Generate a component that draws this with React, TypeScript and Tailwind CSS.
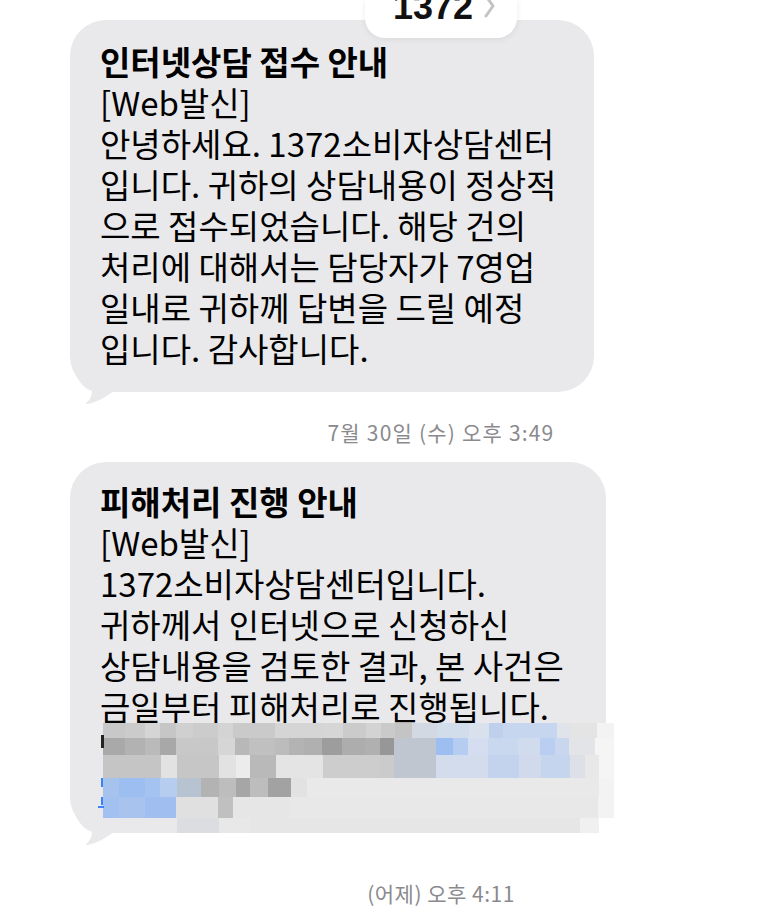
import React from 'react';

const ko = "font-['Noto_Sans_CJK_KR','Noto_Sans',sans-serif]";

// pixelated (blurred) part of the second message, row by row
const mosaic: { h: string; cells: string[] }[] = [
  {
    h: 'h-[15px]',
    cells: [
      'w-[22px] bg-[#c8c8c8]', 'w-[20px] bg-[#cbcbcb]', 'w-[15px] bg-[#d5d5d5]', 'w-[16px] bg-[#c6c6c6]',
      'w-[17px] bg-[#d0d0d0]', 'w-[25px] bg-[#cccccc]', 'w-[15px] bg-[#d4d4d4]', 'w-[42px] bg-[#cacaca]',
      'w-[24px] bg-[#d5d5d5]', 'w-[24px] bg-[#d5d5d5]', 'w-[20px] bg-[#d6d6d6]', 'w-[23px] bg-[#cbcbcb]',
      'w-[15px] bg-[#d3d3d3]', 'w-[14px] bg-[#cacaca]', 'w-[17px] bg-[#c4c4c4]', 'w-[25px] bg-[#d3d9e2]',
      'w-[32px] bg-[#d2ddec]', 'w-[20px] bg-[#d9e1ec]', 'w-[14px] bg-[#bfd0ec]', 'w-[22px] bg-[#c6d6ee]',
      'w-[32px] bg-[#c6d6ee]', 'w-[14px] bg-[#e0e4ea]', 'w-[26px] bg-[#e4e4e4]', 'w-[17px] bg-[#f3f3f3]',
    ],
  },
  {
    h: 'h-[17px]',
    cells: [
      'w-[22px] bg-[#a9a9a9]', 'w-[20px] bg-[#b2b2b2]', 'w-[15px] bg-[#bababa]', 'w-[16px] bg-[#a8a8a8]',
      'w-[42px] bg-[#c8c8c8]', 'w-[17px] bg-[#d6d6d6]', 'w-[14px] bg-[#b8b8b8]', 'w-[26px] bg-[#c0c0c0]',
      'w-[14px] bg-[#bcbcbc]', 'w-[15px] bg-[#b3b3b3]', 'w-[18px] bg-[#b0b0b0]', 'w-[20px] bg-[#9d9d9d]',
      'w-[23px] bg-[#adadad]', 'w-[15px] bg-[#b0b0b0]', 'w-[14px] bg-[#979797]', 'w-[42px] bg-[#c0c6d0]',
      'w-[17px] bg-[#9dbef0]', 'w-[15px] bg-[#b5cdf0]', 'w-[20px] bg-[#d4def0]', 'w-[30px] bg-[#c9d8ee]',
      'w-[22px] bg-[#d0dcee]', 'w-[15px] bg-[#b9cef0]', 'w-[14px] bg-[#c8d6ee]', 'w-[26px] bg-[#e2e4e8]',
      'w-[19px] bg-[#f5f5f5]',
    ],
  },
  {
    h: 'h-[23px]',
    cells: [
      'w-[58px] bg-[#c5c5c5]', 'w-[16px] bg-[#e2e2e2]', 'w-[42px] bg-[#c6c6c6]', 'w-[17px] bg-[#e2e2e2]',
      'w-[14px] bg-[#ececec]', 'w-[26px] bg-[#b9b9b9]', 'w-[47px] bg-[#e4e4e4]', 'w-[57px] bg-[#cdcdcd]',
      'w-[14px] bg-[#cbcbcb]', 'w-[42px] bg-[#c0c6d0]', 'w-[52px] bg-[#d2dcec]', 'w-[31px] bg-[#c3d3ee]',
      'w-[22px] bg-[#d0daec]', 'w-[29px] bg-[#c6d5ee]', 'w-[15px] bg-[#dde0e6]', 'w-[14px] bg-[#e8e8e8]',
      'w-[15px] bg-[#f5f5f5]',
    ],
  },
  {
    h: 'h-[19px]',
    cells: [
      'w-[16px] bg-[#a6c3ee]', 'w-[26px] bg-[#9dbef0]', 'w-[15px] bg-[#a5c3f0]', 'w-[17px] bg-[#b6cdf0]',
      'w-[24px] bg-[#b7c3d0]', 'w-[18px] bg-[#b3b3b3]', 'w-[17px] bg-[#bdbdbd]', 'w-[14px] bg-[#a6a6a6]',
      'w-[18px] bg-[#bdbdbd]', 'w-[23px] bg-[#a2a2a2]', 'w-[16px] bg-[#e2e2e2]', 'w-[292px] bg-[#e9e9e9]',
      'w-[15px] bg-[#f3f3f3]',
    ],
  },
  {
    h: 'h-[21px]',
    cells: [
      'w-[16px] bg-[#a3c1f0]', 'w-[26px] bg-[#a8c3ee]', 'w-[31px] bg-[#a0bff0]', 'w-[42px] bg-[#e0e0e0]',
      'w-[15px] bg-[#c0c0c0]', 'w-[56px] bg-[#e6e6e6]', 'w-[309px] bg-[#e8e8e8]', 'w-[16px] bg-[#f3f3f3]',
    ],
  },
  {
    h: 'h-[15px]',
    cells: [
      'w-[74px]', 'w-[42px] bg-[#dcdde0]', 'w-[31px] bg-[#e8e8e8]', 'w-[330px] bg-[#e6e6e6]',
      'w-[19px] bg-[#f0f0f0]',
    ],
  },
];

function Tail() {
  return (
    <svg
      className="absolute left-0 bottom-[-13px]"
      width="50"
      height="30"
      viewBox="0 0 50 30"
    >
      <path
        d="M6 0 C10 9, 16 14, 22 16 C22 21, 20 25, 16 28 Q15 29, 18 29 C28 27, 37 21, 44 16 L44 6 Z"
        fill="#e9e9eb"
      />
    </svg>
  );
}

function Bubble({ className, children }: { className: string; children: React.ReactNode }) {
  return (
    <div className={`relative whitespace-nowrap rounded-[36px] bg-[#e9e9eb] pl-[30px] text-[33px] leading-[41px] text-black ${className}`}>
      {children}
      <Tail />
    </div>
  );
}

function Stamp({ className, children }: { className: string; children: React.ReactNode }) {
  return (
    <div className={`w-[742px] text-center text-[21px] leading-[24px] text-[#8a8a8e] ${className}`}>
      {children}
    </div>
  );
}

export default function App() {
  return (
    <div className={`relative h-[912px] w-full overflow-hidden bg-white ${ko}`}>
      {/* contact name pill at top */}
      <div className="absolute left-[365px] top-0 z-10 h-[38px] w-[152px] rounded-b-[20px] bg-white shadow-[0_1px_6px_rgba(0,0,0,0.08)]">
        <span className="absolute left-[28px] top-[-11px] font-['Liberation_Sans',sans-serif] text-[36px] font-bold leading-[36px] text-[#111]">
          1372
        </span>
        <svg className="absolute left-[118px] top-0" width="14" height="20" viewBox="0 0 14 20">
          <polyline points="3,-4 10,6 3,16" fill="none" stroke="#c4c4c7" strokeWidth="3" strokeLinecap="round" strokeLinejoin="round" />
        </svg>
      </div>

      <div className="flex flex-col pl-[70px] pt-[20px]">
        <Bubble className="w-[524px] pt-[21px] pb-[23px]">
          <div className="font-bold">인터넷상담 접수 안내</div>
          <div>[Web발신]</div>
          <div>안녕하세요. 1372소비자상담센터</div>
          <div>입니다. 귀하의 상담내용이 정상적</div>
          <div>으로 접수되었습니다. 해당 건의</div>
          <div>처리에 대해서는 담당자가 7영업</div>
          <div>일내로 귀하께 답변을 드릴 예정</div>
          <div>입니다. 감사합니다.</div>
        </Bubble>

        <Stamp className="mt-[28px] tracking-[1.2px]">7월 30일 (수) 오후 3:49</Stamp>

        <Bubble className="mt-[18px] w-[536px] pt-[19px]">
          <div className="font-bold">피해처리 진행 안내</div>
          <div>[Web발신]</div>
          <div>1372소비자상담센터입니다.</div>
          <div>귀하께서 인터넷으로 신청하신</div>
          <div>상담내용을 검토한 결과, 본 사건은</div>
          <div>금일부터 피해처리로 진행됩니다.</div>
          <div className="relative z-10 ml-[3px] mt-[-4px] flex flex-col">
            {mosaic.map((row, i) => (
              <div key={i} className={`flex ${row.h}`}>
                {row.cells.map((c, j) => (
                  <div key={j} className={`shrink-0 ${c}`} />
                ))}
              </div>
            ))}
            <div className="absolute left-[-2px] top-[12px] h-[13px] w-[3px] bg-[#222]" />
            <div className="absolute left-[-2px] top-[55px] h-[9px] w-[2px] bg-[#3b82f6]" />
            <div className="absolute left-[-2px] top-[74px] h-[8px] w-[2px] bg-[#3b82f6]" />
            <div className="absolute left-[-5px] top-[83px] h-[2px] w-[6px] bg-[#3b82f6]" />
          </div>
        </Bubble>

        <Stamp className="mt-[48px] tracking-[0.5px]">(어제) 오후 4:11</Stamp>
      </div>
    </div>
  );
}
